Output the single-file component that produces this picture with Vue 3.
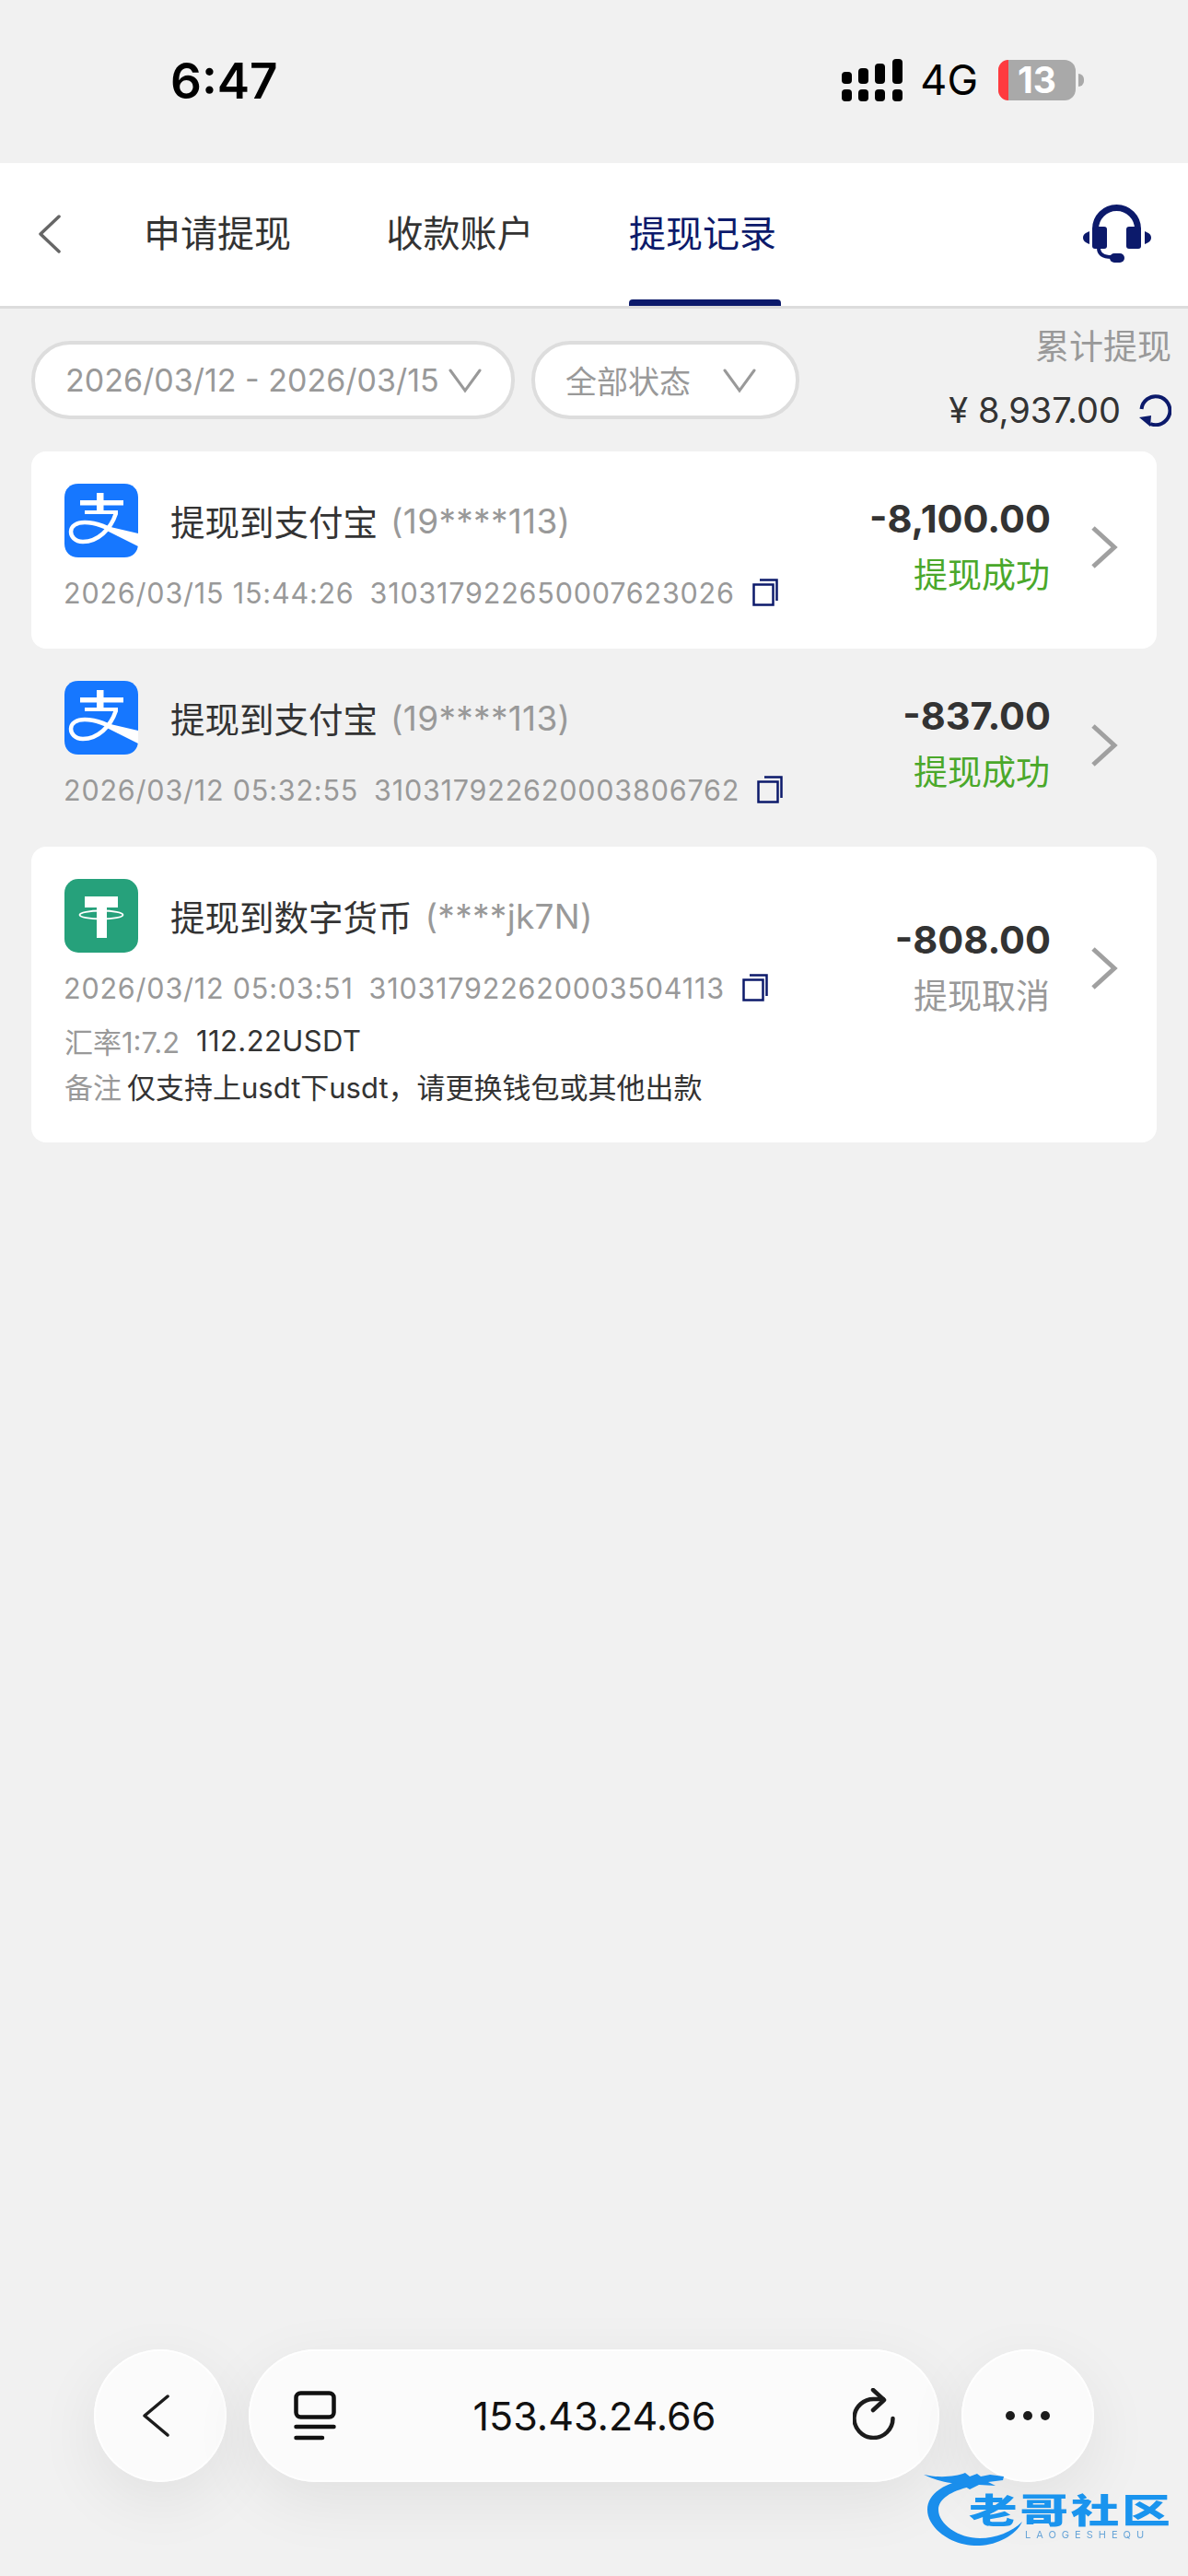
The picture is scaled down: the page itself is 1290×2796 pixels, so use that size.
<template>
  <div class="page">
    <div class="status-bar">
      <span class="clock">6:47</span>
      <div class="status-right">
        <svg class="signal" width="66" height="46" viewBox="0 0 66 46" fill="#000">
          <rect x="0" y="14" width="11" height="13" rx="4" />
          <rect x="18" y="10" width="11" height="17" rx="4" />
          <rect x="36" y="5" width="11" height="22" rx="4" />
          <rect x="55" y="0" width="11" height="27" rx="4" />
          <rect x="0" y="33" width="11" height="13" rx="4" />
          <rect x="18" y="33" width="11" height="13" rx="4" />
          <rect x="36" y="33" width="11" height="13" rx="4" />
          <rect x="55" y="33" width="11" height="13" rx="4" />
        </svg>
        <span class="network">4G</span>
        <div class="battery">
          <span class="battery-low"></span>
          <span class="battery-num">13</span>
          <span class="battery-cap"></span>
        </div>
      </div>
    </div>

    <div class="nav">
      <svg class="nav-back" width="26" height="44" viewBox="0 0 26 44" fill="none" stroke="#666" stroke-width="3.5" stroke-linecap="round" stroke-linejoin="round">
        <path d="M23 3 L3 22 L23 41" />
      </svg>
      <div class="tabs">
        <span v-for="tab in tabs" :key="tab" class="tab" :class="{ active: tab === '提现记录' }">{{ tab }}</span>
      </div>
      <svg class="headset" width="74" height="64" viewBox="0 0 74 64" fill="#0c1a6b">
        <path d="M13.5 30 V26.5 A23 23 0 0 1 59.5 26.5 V30" fill="none" stroke="#0c1a6b" stroke-width="7" />
        <rect x="10" y="24" width="16" height="24" rx="3" />
        <rect x="47" y="24" width="16" height="24" rx="3" />
        <path d="M7 29 C2 31 0 33 0 36 C0 39 2 41 7 43 Z" />
        <path d="M67 29 C72 31 74 33 74 36 C74 39 72 41 67 43 Z" />
        <path d="M17 47 C17 54 22 57 31 57" fill="none" stroke="#0c1a6b" stroke-width="4" />
        <rect x="29" y="53" width="16" height="10" rx="5" />
      </svg>
    </div>

    <div class="filters">
      <div class="pill pill-date">
        <span>2026/03/12 - 2026/03/15</span>
        <svg width="36" height="28" viewBox="0 0 36 28" fill="none" stroke="#999" stroke-width="3" stroke-linecap="round"><path d="M2 3 L18 25 L34 3" /></svg>
      </div>
      <div class="pill pill-status">
        <span>全部状态</span>
        <svg width="36" height="28" viewBox="0 0 36 28" fill="none" stroke="#999" stroke-width="3" stroke-linecap="round"><path d="M2 3 L18 25 L34 3" /></svg>
      </div>
      <div class="total">
        <span class="total-label">累计提现</span>
        <div class="total-value">
          <span>¥ 8,937.00</span>
          <svg width="36" height="36" viewBox="0 0 36 36" fill="none">
            <path d="M3.5 17 A15.5 15.5 0 1 1 13 33" stroke="#0c1a6b" stroke-width="4" />
            <path d="M1 26 L14 24 L13 36 Z" fill="#0c1a6b" />
          </svg>
        </div>
      </div>
    </div>

    <div class="list">
      <div v-for="item in records" :key="item.no" class="card" :class="{ plain: item.plain, tall: item.note }">
        <div class="main">
          <div class="head">
            <svg v-if="item.kind === 'alipay'" class="logo" width="80" height="80" viewBox="0 0 80 80">
              <path d="M15 0 H65 C74 0 80 6 80 15 V65 C80 74 74 80 65 80 H15 C6 80 0 74 0 65 V15 C0 6 6 0 15 0 Z" fill="#1677ff" />
              <path d="M17 18 H64 V23.5 H42.5 V29 H58 V33 H22 V29 H35 V23.5 H17 Z M35 10 H42.5 V18 H35 Z" fill="#fff" />
              <path d="M56 32 C50 50 36 63 20 63 C11 63 7 57 7 52 C7 46 13 42 22 42 C36 42 48 48 60 55" fill="none" stroke="#fff" stroke-width="4.5" />
              <path d="M50 47 L80 54 V68 L46 51 Z" fill="#fff" />
            </svg>
            <svg v-else class="logo" width="80" height="80" viewBox="0 0 80 80">
              <rect width="80" height="80" rx="15" fill="#26a17b" />
              <rect x="22" y="19" width="36" height="12" fill="#fff" />
              <rect x="35" y="19" width="11" height="45" fill="#fff" />
              <ellipse cx="40" cy="39" rx="23.5" ry="4.5" fill="none" stroke="#fff" stroke-width="1.8" />
            </svg>
            <span class="title">{{ item.title }}</span>
            <span class="account">{{ item.account }}</span>
          </div>
          <div class="meta">
            <span>{{ item.time }}</span>
            <span>{{ item.no }}</span>
            <svg class="copy" width="28" height="30" viewBox="0 0 28 30" fill="none" stroke="#0c1a6b" stroke-width="2.5">
              <rect x="1.5" y="6.5" width="21" height="22" />
              <path d="M8 1.5 H26.5 V24" />
            </svg>
          </div>
          <template v-if="item.note">
            <div class="rate">
              <span>汇率1:7.2</span>
              <span class="rate-value">112.22USDT</span>
            </div>
            <div class="note">
              <span>备注</span>
              <span class="note-text">{{ item.note }}</span>
            </div>
          </template>
        </div>
        <div class="side">
          <span class="amount">{{ item.amount }}</span>
          <span class="state" :class="{ ok: item.ok }">{{ item.state }}</span>
        </div>
        <svg class="arrow" :class="{ 'arrow-tall': item.note }" width="30" height="46" viewBox="0 0 30 46" fill="none" stroke="#a0a0a0" stroke-width="5">
          <path d="M3 2 L26 23 L3 44" />
        </svg>
      </div>
    </div>

    <div class="browser-bar">
      <div class="round">
        <svg class="bar-back" width="30" height="46" viewBox="0 0 30 46" fill="none" stroke="#1c1c1c" stroke-width="3.5" stroke-linecap="round" stroke-linejoin="round"><path d="M27 2 L2 23 L27 44" /></svg>
      </div>
      <div class="address">
        <svg width="46" height="54" viewBox="0 0 46 54" fill="none" stroke="#111" stroke-width="4.5" stroke-linecap="round">
          <rect x="2.5" y="2.5" width="41" height="26" rx="5" />
          <path d="M2.5 39 H43.5 M2.5 51 H31" />
        </svg>
        <span class="url">153.43.24.66</span>
        <svg class="bar-reload" width="46" height="56" viewBox="0 0 46 56" fill="none" stroke="#1c1c1c" stroke-width="4.5" stroke-linecap="round" stroke-linejoin="round">
          <path d="M43.5 33 A21 21 0 1 1 24 12 L33 12" />
          <path d="M22 2 L34 13 L22 24" />
        </svg>
      </div>
      <div class="round">
        <svg width="48" height="10" viewBox="0 0 48 10" fill="#1c1c1c"><circle cx="5" cy="5" r="5" /><circle cx="24" cy="5" r="5" /><circle cx="43" cy="5" r="5" /></svg>
      </div>
    </div>

    <div class="watermark">
      <svg class="wm-dragon" width="110" height="88" viewBox="0 0 110 88" fill="#1a8eec">
        <path d="M46 11 C20 16 4 28 4 44 C4 64 30 84 61 83 C80 82 100 72 107 57 C96 68 78 75 61 75 C38 75 16 60 16 44 C16 32 30 24 50 19 Z" />
        <path d="M0 6 C18 10 35 8 45 4 L50 8 L58 5 L62 8 L72 6 L87 8 L86 12 L70 14 L78 18 L60 17 L50 22 L40 16 C28 16 12 12 0 6 Z" />
      </svg>
      <span class="wm-name">老哥社区</span>
      <span class="wm-sub">LAOGESHEQU</span>
    </div>
  </div>
</template>

<script setup>
const tabs = ['申请提现', '收款账户', '提现记录'];

const records = [
  {
    kind: 'alipay',
    title: '提现到支付宝',
    account: '(19****113)',
    time: '2026/03/15 15:44:26',
    no: '310317922650007623026',
    amount: '-8,100.00',
    state: '提现成功',
    ok: true,
  },
  {
    kind: 'alipay',
    plain: true,
    title: '提现到支付宝',
    account: '(19****113)',
    time: '2026/03/12 05:32:55',
    no: '310317922620003806762',
    amount: '-837.00',
    state: '提现成功',
    ok: true,
  },
  {
    kind: 'usdt',
    title: '提现到数字货币',
    account: '(****jk7N)',
    time: '2026/03/12 05:03:51',
    no: '310317922620003504113',
    amount: '-808.00',
    state: '提现取消',
    note: '仅支持上usdt下usdt，请更换钱包或其他出款',
  },
];
</script>

<style>
html,
body {
  margin: 0;
  background: #f1f1f1;
}
</style>

<style scoped>
.page {
  position: relative;
  width: 1290px;
  height: 2796px;
  overflow: hidden;
  background: #f1f1f1;
  font-family: Inter, "Noto Sans CJK SC", sans-serif;
  color: #333;
}

.status-bar {
  height: 177px;
  box-sizing: border-box;
  padding: 61px 122px 0 185px;
  display: flex;
  justify-content: space-between;
  align-items: flex-start;
}

.clock {
  font-size: 53px;
  font-weight: 600;
  line-height: 55px;
  color: #000;
}

.status-right {
  display: flex;
  align-items: center;
  gap: 22px;
  margin: 3px 0 0;
}

.signal {
  margin-right: -3px;
}

.network {
  font-size: 45px;
  line-height: 46px;
  color: #000;
}

.battery {
  position: relative;
  width: 84px;
  height: 44px;
  background: #a9a9a9;
  border-radius: 12px;
  display: flex;
  align-items: center;
  justify-content: center;
}

.battery-low {
  position: absolute;
  left: 0;
  top: 0;
  width: 11px;
  height: 44px;
  background: #ff3b3f;
  border-radius: 12px 0 0 12px;
}

.battery-num {
  font-size: 39px;
  font-weight: 700;
  color: #fff;
  line-height: 44px;
}

.battery-cap {
  position: absolute;
  right: -9px;
  top: 15px;
  width: 6px;
  height: 14px;
  background: #a9a9a9;
  border-radius: 0 6px 6px 0;
}

.nav {
  height: 158px;
  box-sizing: border-box;
  background: #fff;
  border-bottom: 3px solid #dcdcdc;
  display: flex;
  align-items: flex-start;
  padding: 0 40px 0 41px;
}

.nav-back {
  margin-top: 55px;
}

.tabs {
  display: flex;
  gap: 103.5px;
  margin-left: 89px;
  flex: 1;
}

.tab {
  position: relative;
  height: 155px;
  padding-top: 54px;
  box-sizing: border-box;
  font-size: 40px;
  line-height: 46px;
  color: #333;
}

.tab.active {
  color: #0c1a6b;
}

.tab.active::after {
  content: "";
  position: absolute;
  left: 0;
  right: -5px;
  bottom: 0;
  height: 7px;
  background: #0c1a6b;
  border-radius: 4px 4px 0 0;
}

.headset {
  margin-top: 45px;
}

.filters {
  display: flex;
  align-items: flex-start;
  gap: 18px;
  padding: 35px 18px 0 34px;
  height: 155px;
  box-sizing: border-box;
}

.pill {
  height: 85px;
  box-sizing: border-box;
  background: #fff;
  border: 4px solid #ddd;
  border-radius: 42px;
  display: flex;
  align-items: center;
  font-size: 34px;
  color: #999;
}

.pill-date {
  width: 525px;
  padding-left: 33px;
  gap: 10px;
}

.pill-status {
  width: 291px;
  padding-left: 33px;
  gap: 35px;
}

.total {
  margin-left: auto;
  margin-top: -19px;
  display: flex;
  flex-direction: column;
  align-items: flex-end;
}

.total-label {
  font-size: 37px;
  line-height: 52px;
  color: #999;
}

.total-value {
  margin-top: 16px;
  display: flex;
  align-items: center;
  gap: 19px;
  font-size: 38px;
  line-height: 52px;
}

.list {
  margin: 0 34px;
}

.card {
  display: flex;
  align-items: center;
  height: 215px;
  box-sizing: border-box;
  padding: 35px 42px 41px 36px;
  background: #fff;
  border-radius: 16px;
}

.card:first-child {
  height: 214px;
}

.card.plain {
  background: transparent;
}

.card.tall {
  height: 321px;
}

.main {
  flex: 1;
  align-self: flex-start;
}

.head {
  display: flex;
  align-items: center;
  height: 80px;
}

.logo {
  flex-shrink: 0;
}

.title {
  margin-left: 35px;
  padding-bottom: 2px;
  font-size: 37.5px;
  color: #333;
}

.account {
  margin-left: 14px;
  font-size: 37px;
  letter-spacing: 0.3px;
  color: #999;
}

.meta {
  margin-top: 18px;
  margin-left: -1px;
  display: flex;
  align-items: center;
  height: 40px;
  font-size: 30.5px;
  letter-spacing: 0.8px;
  color: #999;
  gap: 17px;
}

.copy {
  margin-left: 2px;
}

.rate {
  margin-top: 17px;
  height: 40px;
  display: flex;
  align-items: center;
  gap: 18px;
  font-size: 31px;
  color: #999;
}

.rate-value {
  letter-spacing: 0.4px;
  color: #333;
}

.note {
  margin-top: 9px;
  height: 40px;
  display: flex;
  align-items: center;
  gap: 6px;
  font-size: 31px;
  color: #999;
}

.note-text {
  color: #333;
}

.side {
  display: flex;
  flex-direction: column;
  align-items: flex-end;
  gap: 13px;
}

.tall .side {
  margin-bottom: 51px;
}

.amount {
  margin-right: -1px;
  font-size: 41.5px;
  font-weight: 700;
  line-height: 48px;
  color: #333;
}

.state {
  font-size: 37px;
  line-height: 50px;
  color: #999;
}

.state.ok {
  color: #4aa82a;
}

.arrow {
  margin-left: 44px;
  flex-shrink: 0;
}

.arrow-tall {
  margin-bottom: 51px;
}

.browser-bar {
  position: absolute;
  left: 102px;
  top: 2550px;
  display: flex;
  gap: 24px;
}

.round,
.address {
  height: 144px;
  background: #fbfbfb;
  box-shadow: 0 20px 70px rgba(0, 0, 0, 0.07), inset 0 0 0 2px #fefefe;
  display: flex;
  align-items: center;
}

.round {
  width: 144px;
  border-radius: 50%;
  justify-content: center;
}

.bar-back {
  margin-right: 9px;
}

.address {
  width: 750px;
  box-sizing: border-box;
  padding: 0 48px 0 49px;
  border-radius: 72px;
  justify-content: space-between;
}

.bar-reload {
  margin-bottom: 4px;
}

.url {
  font-size: 43px;
  color: #111;
}

.watermark {
  position: absolute;
  left: 1003px;
  top: 2680px;
  width: 267px;
  height: 88px;
  filter: blur(0.6px);
}

.wm-dragon {
  position: absolute;
  left: 0;
  top: 0;
}

.wm-name {
  position: absolute;
  left: 49px;
  top: 28px;
  font-size: 37px;
  line-height: 36px;
  font-weight: 900;
  letter-spacing: 2px;
  white-space: nowrap;
  color: #1a94ee;
  transform: scaleX(1.42);
  transform-origin: left center;
}

.wm-sub {
  position: absolute;
  left: 110px;
  top: 66px;
  font-size: 11px;
  line-height: 11px;
  letter-spacing: 6px;
  white-space: nowrap;
  color: #6aa6d8;
}
</style>
